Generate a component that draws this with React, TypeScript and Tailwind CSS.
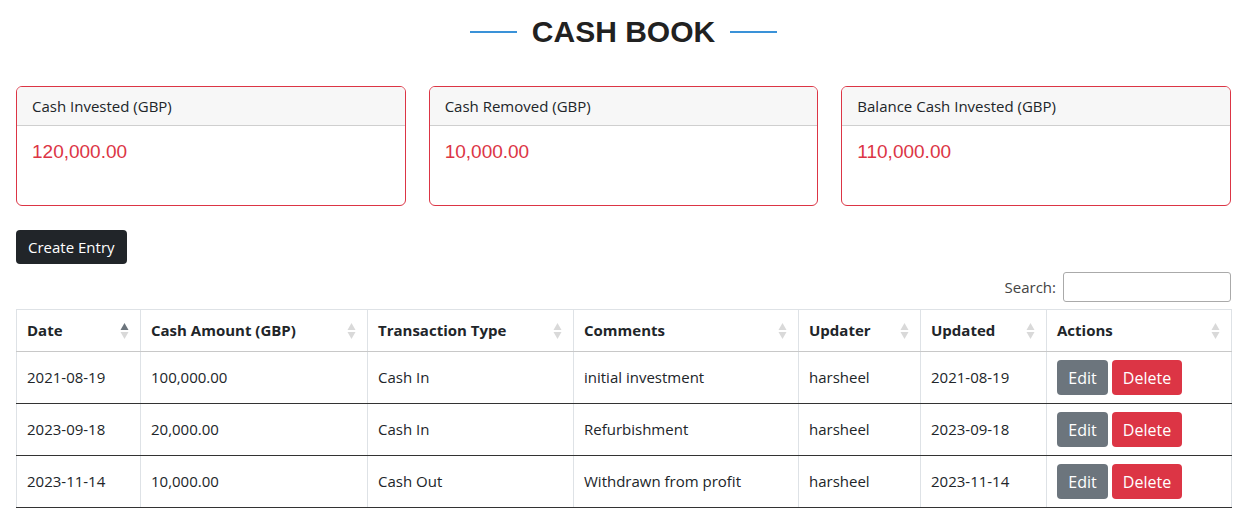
import React from "react";

const rows = [
  ["2021-08-19", "100,000.00", "Cash In", "initial investment", "harsheel", "2021-08-19"],
  ["2023-09-18", "20,000.00", "Cash In", "Refurbishment", "harsheel", "2023-09-18"],
  ["2023-11-14", "10,000.00", "Cash Out", "Withdrawn from profit", "harsheel", "2023-11-14"],
];

const cols = [
  { name: "Date", w: "w-[124px]", active: true },
  { name: "Cash Amount (GBP)", w: "w-[227px]" },
  { name: "Transaction Type", w: "w-[206px]" },
  { name: "Comments", w: "w-[225px]" },
  { name: "Updater", w: "w-[122px]" },
  { name: "Updated", w: "w-[126px]" },
  { name: "Actions", w: "w-[185px]" },
];

function SortIcon({ active }: { active?: boolean }) {
  return (
    <svg width="9" height="20" viewBox="0 0 9 20" className="absolute right-[11px] top-1/2 -translate-y-1/2">
      <path d="M4.5 2 L8.5 9 L0.5 9 Z" fill={active ? "#6c757d" : "#d9d9d9"} />
      <path d="M4.5 18 L8.5 11 L0.5 11 Z" fill="#d9d9d9" />
    </svg>
  );
}

function Card({ title, value }: { title: string; value: string }) {
  return (
    <div className="h-[120px] rounded-[6px] border border-[#dc3545] overflow-hidden">
      <div className="h-[39px] bg-[#f7f7f7] border-b border-[#cfcfcf] px-[15px] flex items-center text-[15px] text-[#212529]">
        {title}
      </div>
      <div className="px-[15px] pt-[12px] text-[19px] text-[#dc3545] font-['Liberation_Sans',Arial,sans-serif]">
        {value}
      </div>
    </div>
  );
}

export default function App() {
  return (
    <div className="w-[1243px] h-[517px] bg-white font-['Open_Sans',sans-serif] text-[#212529] overflow-hidden">
      <div className="w-[1215px] ml-4">
        <div className="h-[64px] flex items-center justify-center gap-[15px]">
          <div className="w-[47px] h-[2px] bg-[#3a92d8]" />
          <h1 className="text-[30px] font-bold font-['Liberation_Sans',Arial,sans-serif] text-[#212121] leading-none tracking-normal">
            CASH BOOK
          </h1>
          <div className="w-[47px] h-[2px] bg-[#3a92d8]" />
        </div>
        <div className="mt-[22px] grid grid-cols-3 gap-[23px]">
          <Card title="Cash Invested (GBP)" value="120,000.00" />
          <Card title="Cash Removed (GBP)" value="10,000.00" />
          <Card title="Balance Cash Invested (GBP)" value="110,000.00" />
        </div>
        <div className="mt-[24px]">
          <button className="h-[34px] px-[12px] rounded-[4px] bg-[#212529] text-white text-[15px]">
            Create Entry
          </button>
        </div>
        <div className="mt-[8px] flex justify-end items-center gap-[7px] text-[15px] text-[#444]">
          <span>Search:</span>
          <input className="w-[168px] h-[30px] border border-[#aaa] rounded-[3px] outline-none" />
        </div>
        <table className="mt-[7px] w-[1215px] border-collapse table-fixed text-[15px]">
          <thead>
            <tr className="h-[42px]">
              {cols.map((c) => (
                <th
                  key={c.name}
                  className={`${c.w} relative text-left font-bold px-[10px] pb-[1px] border border-[#dee2e6] border-b-[#c8c8c8]`}
                >
                  {c.name}
                  <SortIcon active={c.active} />
                </th>
              ))}
            </tr>
          </thead>
          <tbody>
            {rows.map((r, i) => (
              <tr key={i} className="h-[52px] border-b border-b-[#333]">
                {r.map((v, j) => (
                  <td key={j} className="px-[10px] border-x border-[#dee2e6] border-b-[#333] border-b">
                    {v}
                  </td>
                ))}
                <td className="px-[10px] border-x border-[#dee2e6] border-b border-b-[#333]">
                  <div className="flex gap-[4px]">
                    <button className="h-[35px] w-[51px] rounded-[4px] bg-[#6c757d] text-white text-[16px]">Edit</button>
                    <button className="h-[35px] w-[70px] rounded-[4px] bg-[#dc3545] text-white text-[16px]">Delete</button>
                  </div>
                </td>
              </tr>
            ))}
          </tbody>
        </table>
      </div>
    </div>
  );
}
